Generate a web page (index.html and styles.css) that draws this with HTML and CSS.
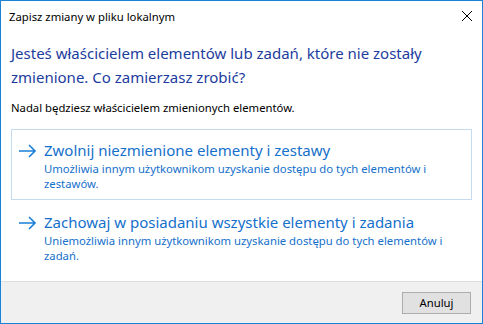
FILE: index.html
```html
<!DOCTYPE html>
<html lang="pl">
<head>
    <meta charset="UTF-8">
    <title>Zapisz zmiany w pliku lokalnym</title>
    <link rel="stylesheet" href="styles.css">
</head>
<body>
    <div class="window">
        <div class="titlebar">
            <span class="title">Zapisz zmiany w pliku lokalnym</span>
            <svg class="close" width="12" height="12" viewBox="0 0 12 12">
                <path d="M1 1 L11 11 M11 1 L1 11" stroke="#000" stroke-width="1" fill="none"/>
            </svg>
        </div>
        <div class="content">
            <h1 class="instruction">Jesteś właścicielem elementów lub zadań, które nie zostały zmienione. Co zamierzasz zrobić?</h1>
            <p class="info">Nadal będziesz właścicielem zmienionych elementów.</p>

            <div class="option selected">
                <svg class="arrow" width="18" height="14" viewBox="0 0 18 14">
                    <path d="M0 7 H16 M10 1 L16 7 L10 13" stroke="#1a7fd7" stroke-width="1.6" fill="none"/>
                </svg>
                <div class="option-text">
                    <div class="option-title">Zwolnij niezmienione elementy i zestawy</div>
                    <div class="option-desc">Umożliwia innym użytkownikom uzyskanie dostępu do tych elementów i zestawów.</div>
                </div>
            </div>

            <div class="option">
                <svg class="arrow" width="18" height="14" viewBox="0 0 18 14">
                    <path d="M0 7 H16 M10 1 L16 7 L10 13" stroke="#1a7fd7" stroke-width="1.6" fill="none"/>
                </svg>
                <div class="option-text">
                    <div class="option-title">Zachowaj w posiadaniu wszystkie elementy i zadania</div>
                    <div class="option-desc">Uniemożliwia innym użytkownikom uzyskanie dostępu do tych elementów i zadań.</div>
                </div>
            </div>
        </div>
        <div class="footer">
            <button class="btn">Anuluj</button>
        </div>
    </div>
</body>
</html>
```

FILE: styles.css
```css
html, body {
    margin: 0;
    padding: 0;
}
body {
    font-family: 'Segoe UI', 'Noto Sans', sans-serif;
    font-size: 11.3px;
    color: #000;
    background: #fff;
}
.window {
    width: 483px;
    height: 324px;
    box-sizing: border-box;
    border: 1px solid #1883d7;
    display: flex;
    flex-direction: column;
}
.titlebar {
    height: 30px;
    display: flex;
    align-items: center;
    justify-content: space-between;
    padding: 0 9px 0 8px;
}
.content {
    flex: 1;
    padding: 10px 10px 0 10px;
}
.instruction {
    margin: 0;
    font-size: 15px;
    font-weight: normal;
    line-height: 24px;
    color: #1c3c9e;
}
.info {
    margin: 11px 0 13px 0;
    line-height: 16px;
}
.option {
    display: flex;
    align-items: flex-start;
    border: 1px solid transparent;
    padding: 9px 10px 8px 7px;
    margin-bottom: 1px;
}
.option.selected {
    border-color: #c5dcf0;
}
.arrow {
    margin-top: 5px;
    margin-right: 7px;
    flex-shrink: 0;
}
.option-title {
    font-size: 15px;
    line-height: 22px;
    color: #1570cc;
}
.option-desc {
    color: #1570cc;
    line-height: 15px;
}
.footer {
    height: 41px;
    background: #f0f0f0;
    border-top: 1px solid #dfdfdf;
    display: flex;
    align-items: center;
    justify-content: flex-end;
    padding-right: 11px;
}
.btn {
    width: 69px;
    height: 22px;
    background: #e1e1e1;
    border: 1px solid #adadad;
    font-family: inherit;
    font-size: 11.3px;
    padding: 0;
}
```
